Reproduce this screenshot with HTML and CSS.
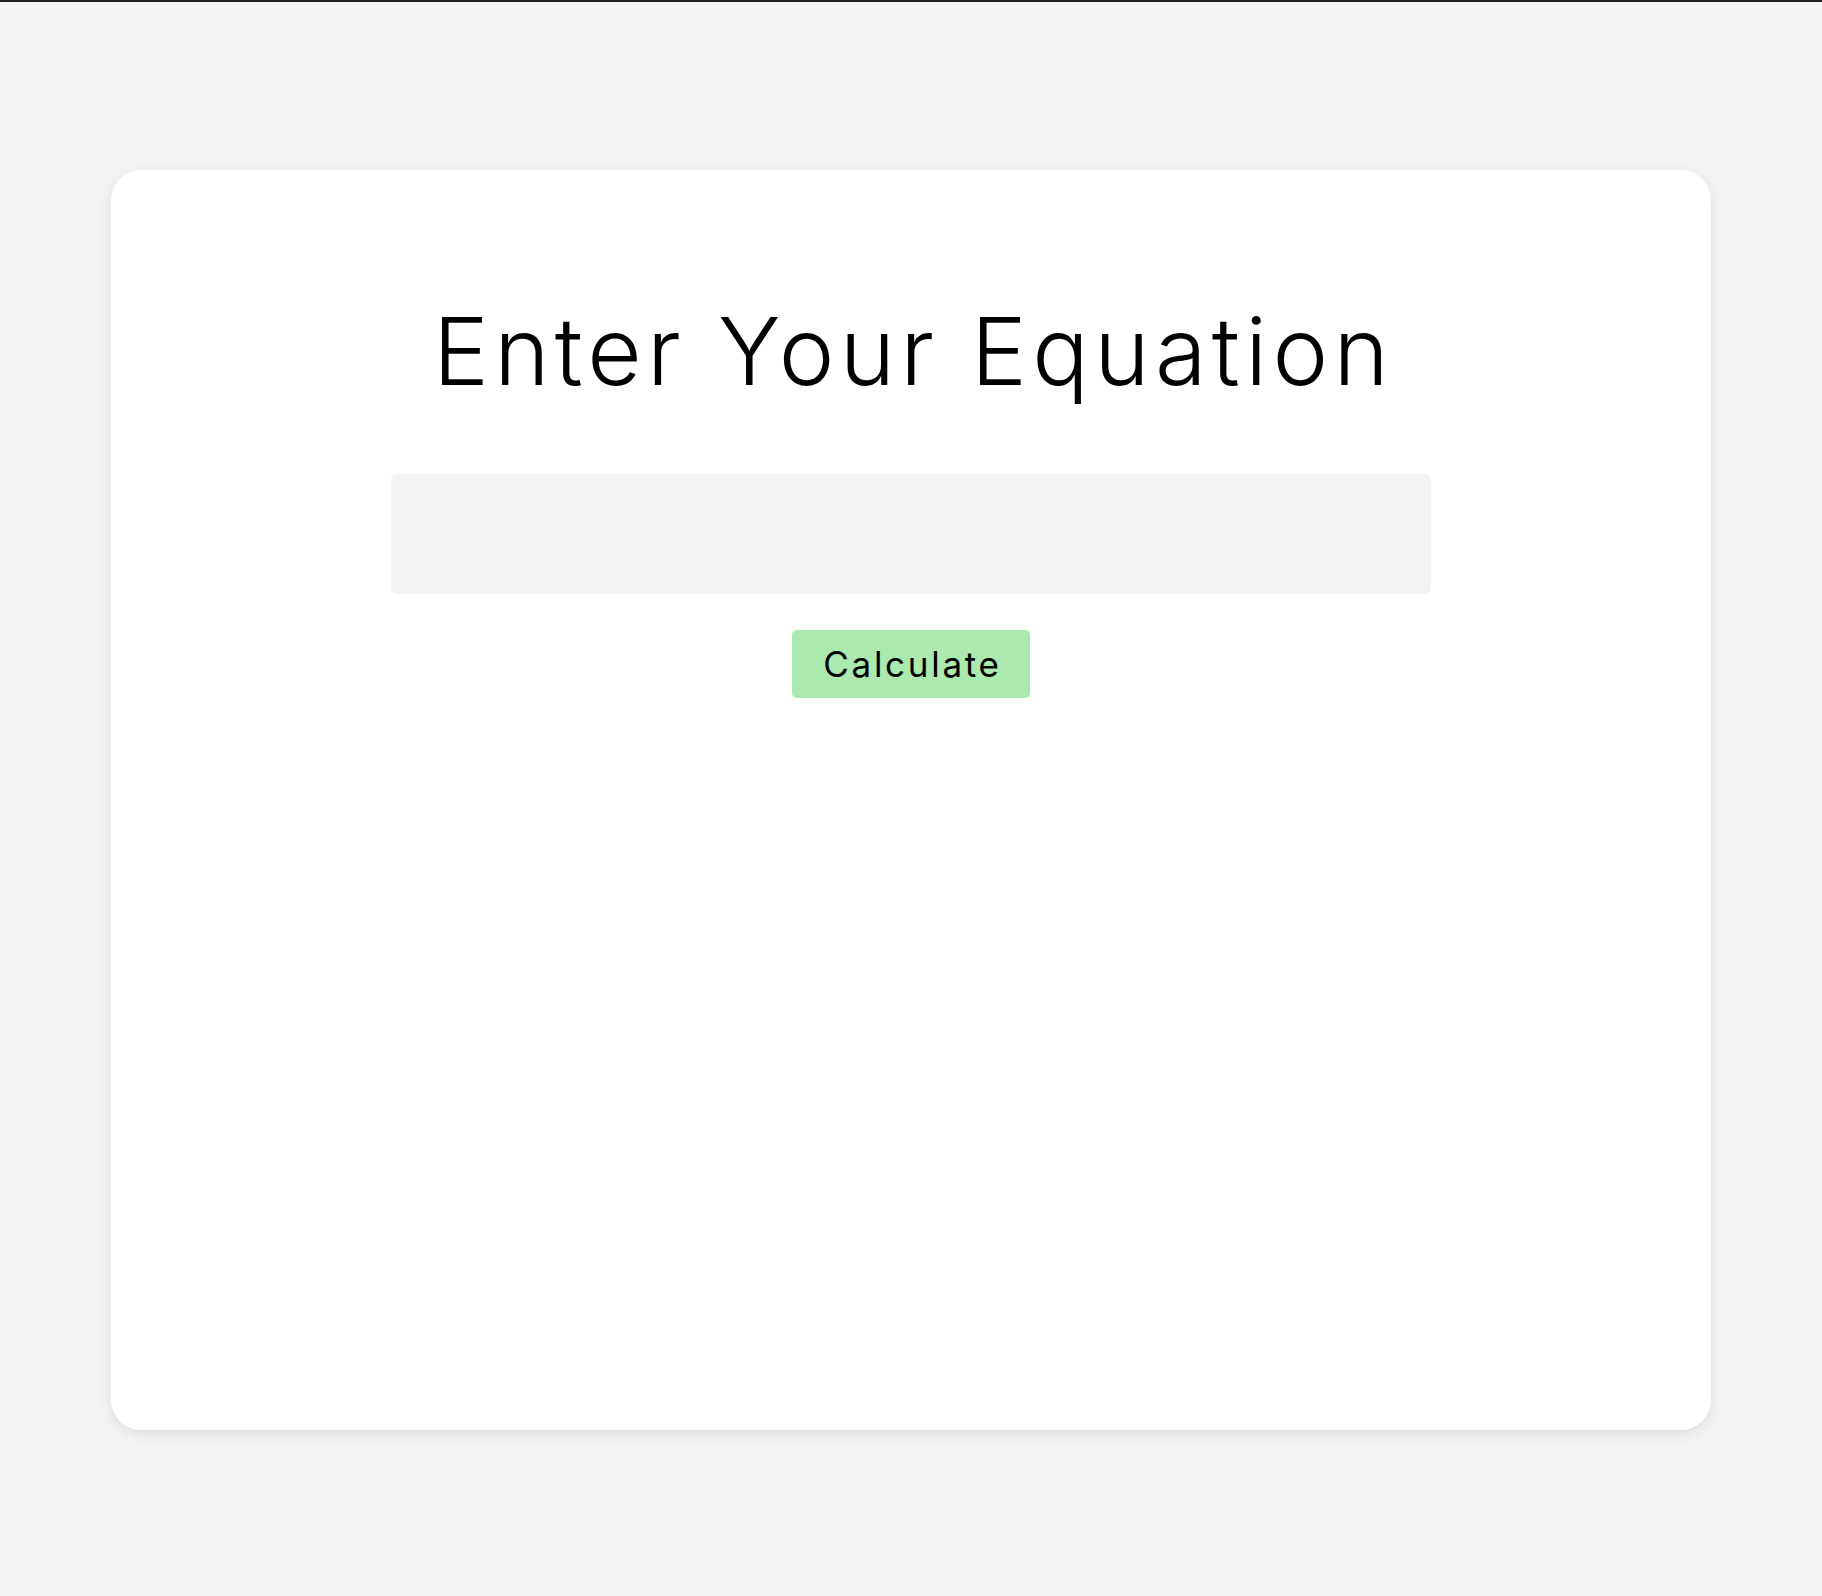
FILE: index.html
```html
<!DOCTYPE html>
<html>
<head>
<meta charset="utf-8">
<link rel="stylesheet" href="styles.css">
</head>
<body>
<div class="topbar"></div>
<main class="card">
  <h1 class="title">Enter Your Equation</h1>
  <input class="equation" type="text">
  <button class="calc">Calculate</button>
</main>
</body>
</html>
```
FILE: styles.css
```css
html, body {
  margin: 0;
  padding: 0;
}
body {
  background: #f4f4f4;
  font-family: Inter, "Open Sans", sans-serif;
  min-height: 1596px;
}
.topbar {
  height: 2px;
  background: #222222;
}
.card {
  box-sizing: border-box;
  width: 1600px;
  height: 1260px;
  margin: 168px auto 0;
  background: #ffffff;
  border-radius: 30px;
  box-shadow: 0 4px 14px rgba(0, 0, 0, 0.1);
  padding-top: 126px;
  display: flex;
  flex-direction: column;
  align-items: center;
}
.title {
  margin: 0;
  font-size: 94px;
  line-height: 111px;
  font-weight: 300;
  color: #000;
  letter-spacing: 5.3px;
  padding-left: 5px;
}
.equation {
  box-sizing: border-box;
  margin-top: 67px;
  width: 1040px;
  height: 120px;
  border: none;
  border-radius: 6px;
  background: #f3f3f3;
  outline: none;
}
.calc {
  margin-top: 36px;
  height: 68px;
  padding: 0 28px 0 31px;
  border: none;
  border-radius: 5px;
  background: #abeaae;
  color: #000;
  font-family: Inter, "Open Sans", sans-serif;
  font-size: 35px;
  font-weight: 400;
  letter-spacing: 2.7px;
}
```
